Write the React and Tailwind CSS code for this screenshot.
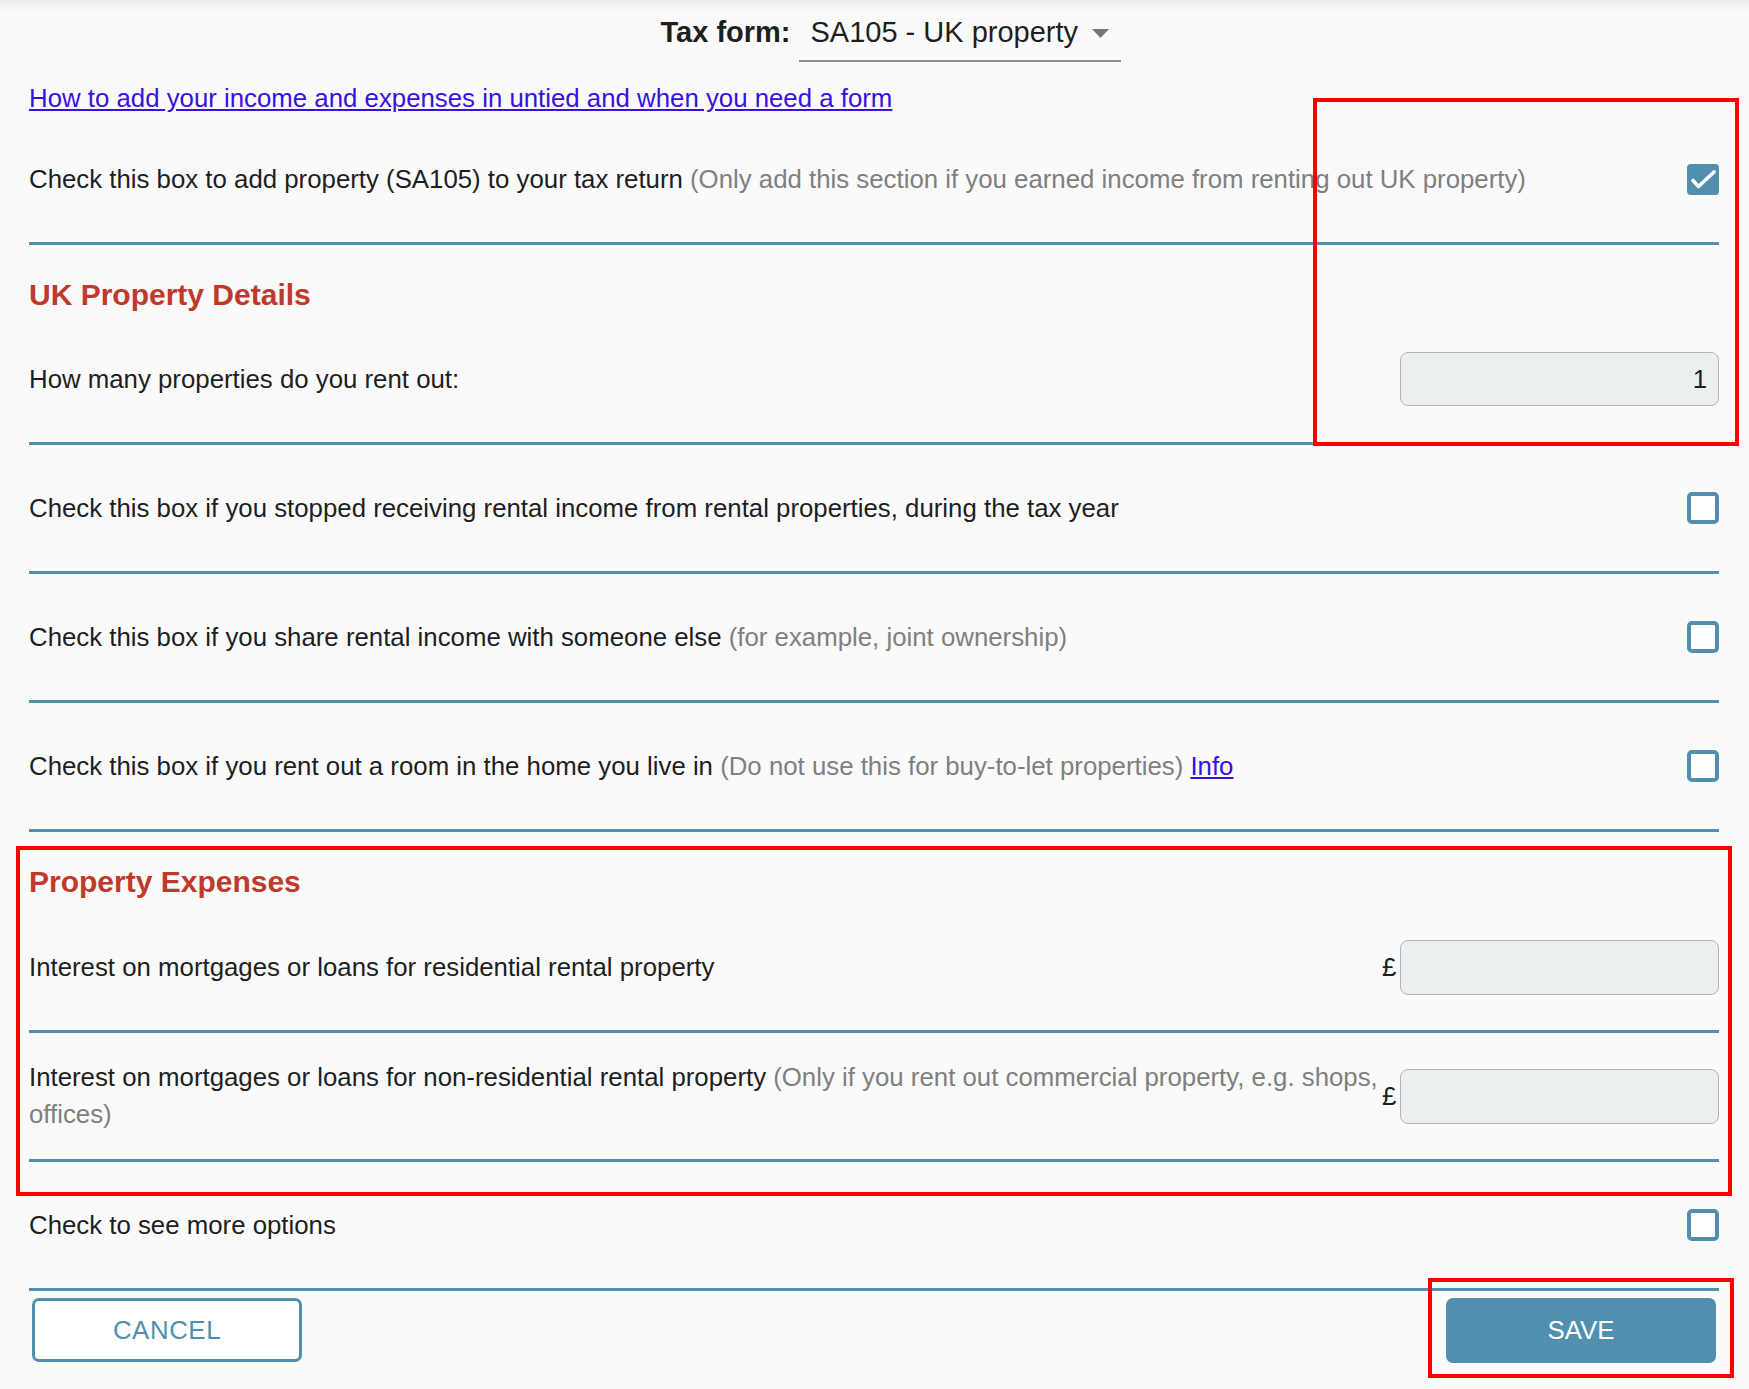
import React from 'react'

const Checkbox = ({ checked }) => {
  if (checked) {
    return (
      <div className="flex h-[31px] w-[32px] shrink-0 items-center justify-center rounded-[4px] bg-[#528fae]">
        <svg width="32" height="31" viewBox="0 0 32 31" fill="none">
          <polyline points="6,16.5 11.5,22.5 27,8" stroke="white" strokeWidth="3.6" strokeLinecap="round" strokeLinejoin="round" />
        </svg>
      </div>
    )
  }
  return <div className="h-[32px] w-[32px] shrink-0 rounded-[5px] border-4 border-[#528fae] bg-white" />
}

const MoneyInput = () => (
  <div className="flex shrink-0 items-center gap-[4px]">
    <span className="w-[14px] text-[25.8px] leading-[37px] text-[#1e1e1e]">£</span>
    <div className="h-[55px] w-[319px] rounded-[8px] border border-[#aeb6b9] bg-[#ebeff0]" />
  </div>
)

const Row = ({ children, right }) => (
  <div className="flex h-[129px] items-center justify-between border-b-[3px] border-[#528fae]">
    <div className="min-w-0 flex-1 text-[25.8px] leading-[37px] text-[#1e1e1e]">{children}</div>
    {right}
  </div>
)

const Note = ({ children }) => <span className="text-[#808080]">{children}</span>

const Heading = ({ children, last }) => (
  <div className={`pt-[32px] ${last ? 'pb-[4px]' : 'pb-[3px]'}`}>
    <h2 className="text-[30px] font-bold leading-[36px] text-[#c0392b]">{children}</h2>
  </div>
)

export default function App() {
  return (
    <div className="relative min-h-[1389px] bg-[#fafafa] pl-[29px] pr-[30px] font-['Liberation_Sans',Arial,sans-serif]">
      <div className="pointer-events-none absolute left-0 right-0 top-0 h-[12px] bg-gradient-to-b from-[#ececec] to-transparent" />

      {/* tax form picker */}
      <div className="flex justify-center pl-[34px] pt-[14px]">
        <div className="flex items-start gap-[9px]">
          <span className="text-[29px] font-bold leading-[36px] text-[#1e1e1e]">Tax form:</span>
          <div className="flex h-[48px] w-[322px] items-start justify-between border-b-2 border-[#8e8e8e] pl-[11px] pr-[12px]">
            <span className="text-[29px] leading-[36px] text-[#1e1e1e]">SA105 - UK property</span>
            <svg className="mt-[15px]" width="17" height="9" viewBox="0 0 17 9">
              <polygon points="0,0 17,0 8.5,9" fill="#777777" />
            </svg>
          </div>
        </div>
      </div>

      <div className="mt-[21px] h-[33px] text-[25.8px] leading-[30px]">
        <a href="#" className="text-[#3a10de] underline">How to add your income and expenses in untied and when you need a form</a>
      </div>

      <Row right={<Checkbox checked />}>
        Check this box to add property (SA105) to your tax return <Note>(Only add this section if you earned income from renting out UK property)</Note>
      </Row>

      <Heading>UK Property Details</Heading>

      <Row right={
        <div className="flex h-[54px] w-[319px] shrink-0 items-center justify-end rounded-[8px] border border-[#aeb6b9] bg-[#ebeff0] pr-[11px] text-[25.8px] text-[#1e1e1e]">1</div>
      }>
        How many properties do you rent out:
      </Row>

      <Row right={<Checkbox />}>
        Check this box if you stopped receiving rental income from rental properties, during the tax year
      </Row>

      <Row right={<Checkbox />}>
        Check this box if you share rental income with someone else <Note>(for example, joint ownership)</Note>
      </Row>

      <Row right={<Checkbox />}>
        Check this box if you rent out a room in the home you live in <Note>(Do not use this for buy-to-let properties)</Note>{' '}
        <a href="#" className="text-[#3a10de] underline">Info</a>
      </Row>

      <Heading last>Property Expenses</Heading>

      <Row right={<MoneyInput />}>
        Interest on mortgages or loans for residential rental property
      </Row>

      <Row right={<MoneyInput />}>
        Interest on mortgages or loans for non-residential rental property <Note>(Only if you rent out commercial property, e.g. shops, offices)</Note>
      </Row>

      <Row right={<Checkbox />}>
        Check to see more options
      </Row>

      <div className="mt-[7px] flex justify-between px-[3px]">
        <button className="h-[64px] w-[270px] rounded-[7px] border-[3px] border-[#528fae] bg-white text-[25.8px] tracking-[0.6px] text-[#528fae]">CANCEL</button>
        <button className="h-[65px] w-[270px] rounded-[7px] bg-[#528fae] text-[25.8px] text-white">SAVE</button>
      </div>

      {/* review markers */}
      <div className="pointer-events-none absolute left-[1313px] top-[98px] h-[348px] w-[426px] border-4 border-[#ff0000]" />
      <div className="pointer-events-none absolute left-[16px] top-[846px] h-[350px] w-[1716px] border-4 border-[#ff0000]" />
      <div className="pointer-events-none absolute left-[1428px] top-[1278px] h-[100px] w-[306px] border-4 border-[#ff0000]" />
    </div>
  )
}
